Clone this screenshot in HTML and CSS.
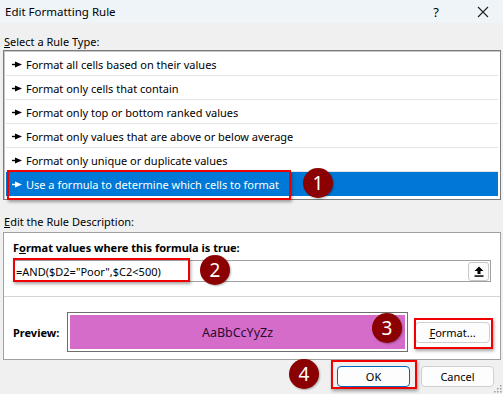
FILE: index.html
```html
<!DOCTYPE html>
<html>
<head>
<meta charset="utf-8">
<link rel="stylesheet" href="styles.css">
</head>
<body>
<div class="dialog">
  <div class="titlebar">
    <span class="title">Edit Formatting Rule</span>
    <span class="tb-btns"><span class="help">?</span><svg class="close" width="12" height="12" viewBox="0 0 12 12"><path d="M1 1L11 11M11 1L1 11" stroke="#222" stroke-width="1.1"/></svg></span>
  </div>
  <div class="content">
    <div class="label l1"><u>S</u>elect a Rule Type:</div>
    <div class="listbox">
      <div class="row"><svg class="arr" width="10" height="7" viewBox="0 0 10 7"><rect x="0" y="2.8" width="4" height="1.4" fill="currentColor"/><polygon points="3,0.5 10,3.5 3,6.5" fill="currentColor"/></svg>Format all cells based on their values</div>
      <div class="row"><svg class="arr" width="10" height="7" viewBox="0 0 10 7"><rect x="0" y="2.8" width="4" height="1.4" fill="currentColor"/><polygon points="3,0.5 10,3.5 3,6.5" fill="currentColor"/></svg>Format only cells that contain</div>
      <div class="row"><svg class="arr" width="10" height="7" viewBox="0 0 10 7"><rect x="0" y="2.8" width="4" height="1.4" fill="currentColor"/><polygon points="3,0.5 10,3.5 3,6.5" fill="currentColor"/></svg>Format only top or bottom ranked values</div>
      <div class="row"><svg class="arr" width="10" height="7" viewBox="0 0 10 7"><rect x="0" y="2.8" width="4" height="1.4" fill="currentColor"/><polygon points="3,0.5 10,3.5 3,6.5" fill="currentColor"/></svg>Format only values that are above or below average</div>
      <div class="row"><svg class="arr" width="10" height="7" viewBox="0 0 10 7"><rect x="0" y="2.8" width="4" height="1.4" fill="currentColor"/><polygon points="3,0.5 10,3.5 3,6.5" fill="currentColor"/></svg>Format only unique or duplicate values</div>
      <div class="row sel"><svg class="arr" width="10" height="7" viewBox="0 0 10 7"><rect x="0" y="2.8" width="4" height="1.4" fill="currentColor"/><polygon points="3,0.5 10,3.5 3,6.5" fill="currentColor"/></svg>Use a formula to determine which cells to format</div>
    </div>
    <div class="label l2"><u>E</u>dit the Rule Description:</div>
    <div class="descbox">
      <div class="desc-top">
        <div class="bold">F<u>o</u>rmat values where this formula is true:</div>
        <div class="input">
          <span class="formula">=AND($D2="Poor",$C2&lt;500)</span>
          <span class="refbtn"><svg width="10" height="11" viewBox="0 0 10 11"><polygon points="5,0.5 9.5,5 6.5,5 6.5,8 3.5,8 3.5,5 0.5,5" fill="#000"/><rect x="0.5" y="9.3" width="9" height="1.5" fill="#000"/></svg></span>
        </div>
      </div>
      <div class="desc-bottom">
        <div class="bold plabel">Preview:</div>
        <div class="preview"><div class="pinner">AaBbCcYyZz</div></div>
        <div class="btn fmt"><u>F</u>ormat...</div>
      </div>
    </div>
    <div class="footer">
      <div class="btn ok">OK</div>
      <div class="btn cancel">Cancel</div>
    </div>
  </div>

  <div class="hl h1"></div>
  <div class="hl h2"></div>
  <div class="hl h3"></div>
  <div class="hl h4"></div>
  <div class="badge b1">1</div>
  <div class="badge b2">2</div>
  <div class="badge b3">3</div>
  <div class="badge b4">4</div>
  <svg class="grip" width="8" height="8" viewBox="0 0 8 8"><g fill="#9a9a9a"><rect x="6" y="0" width="1.5" height="1.5"/><rect x="3" y="3" width="1.5" height="1.5"/><rect x="6" y="3" width="1.5" height="1.5"/><rect x="0" y="6" width="1.5" height="1.5"/><rect x="3" y="6" width="1.5" height="1.5"/><rect x="6" y="6" width="1.5" height="1.5"/></g></svg>
</div>
</body>
</html>
```
FILE: styles.css
```css
* { box-sizing: border-box; }
html, body { margin: 0; padding: 0; }
body {
  width: 503px; height: 394px; overflow: hidden;
  font-family: "Noto Sans", "Open Sans", sans-serif;
  font-size: 11px; color: #000;
  background: #f0f0f0;
}
.dialog { position: relative; width: 503px; height: 394px; }
.titlebar {
  height: 23px; background: #eff4f9;
  display: flex; align-items: center; justify-content: space-between;
  padding: 0 0 0 5px;
}
.title { font-size: 11.5px; }
.tb-btns { display: flex; align-items: center; }
.help { font-size: 13px; margin-right: 38px; }
.close { margin-right: 14px; }
.content { padding: 0 2px 0 3px; display: flex; flex-direction: column; }
.label { height: 27px; display: flex; align-items: flex-end; padding-left: 1px; padding-bottom: 0; line-height: 16px; }
.l2 { height: 32px; padding-bottom: 2px; }
.listbox {
  height: 150px; background: #fff;
  border: 1px solid #7a7a7a;
  box-shadow: inset 1px 1px 0 #c8c8c8;
  padding: 1px 2px 0 2px;
}
.row {
  height: 24px; display: flex; align-items: center;
  padding-left: 6px; padding-top: 1px;
  border-bottom: 1px solid #e6e6e6;
}
.row.sel { background: #0078d7; color: #fff; border-bottom: none; }
.arr { margin-right: 4px; flex: none; }
.descbox {
  height: 128px; background: #fff;
  border: 1px solid #a0a0a0;
  display: flex; flex-direction: column;
}
.desc-top { height: 64px; border-bottom: 1px solid #d5d5d5; padding: 7px 9px 0 9px; }
.bold { font-weight: bold; line-height: 16px; }
.input {
  margin-top: 4px; height: 22px; width: 478px;
  border: 1px solid #a0a0a0;
  display: flex; align-items: center; justify-content: space-between;
  padding: 0 1px 0 2px;
}
.refbtn {
  width: 21px; height: 19px; border: 1px solid #c8c8c8; border-radius: 3px;
  display: flex; align-items: center; justify-content: center; background: #fdfdfd;
}
.desc-bottom { flex: 1; display: flex; align-items: flex-start; padding: 15px 0 0 9px; }
.plabel { width: 54px; margin-top: 13px; }
.preview {
  width: 341px; height: 40px; border: 1px solid #6f6f6f; padding: 2px;
}
.pinner {
  height: 100%; background: #d66cca; color: #2a0a30;
  display: flex; align-items: center; justify-content: center; font-size: 12.5px;
}
.btn {
  height: 21px; border: 1px solid #cfcfcf; border-radius: 4px; background: #fdfdfd;
  display: flex; align-items: center; justify-content: center;
}
.fmt { width: 75px; margin-left: 7px; margin-top: 10px; }
.footer { display: flex; justify-content: flex-end; gap: 11px; padding-top: 6px; padding-right: 7px; }
.ok { width: 73px; border-color: #0067c0; }
.cancel { width: 73px; }

.hl { position: absolute; border: 2px solid #f00000; box-shadow: 1px 2px 3px rgba(0,0,0,0.35); }
.h1 { left: 7px; top: 170px; width: 284px; height: 30px; }
.h2 { left: 13px; top: 258px; width: 177px; height: 24px; }
.h3 { left: 414px; top: 318px; width: 79px; height: 31px; }
.h4 { left: 331px; top: 360px; width: 86px; height: 29px; }
.badge {
  position: absolute; width: 30px; height: 30px; border-radius: 50%;
  background: #8b0000; color: #fff; font-size: 19px;
  display: flex; align-items: center; justify-content: center;
  box-shadow: 1px 1px 2px rgba(0,0,0,0.3);
}
.b1 { left: 303px; top: 168px; }
.b2 { left: 200px; top: 255px; }
.b3 { left: 372px; top: 313px; }
.b4 { left: 289px; top: 359px; }
.grip { position: absolute; right: 1px; bottom: 1px; }
```
